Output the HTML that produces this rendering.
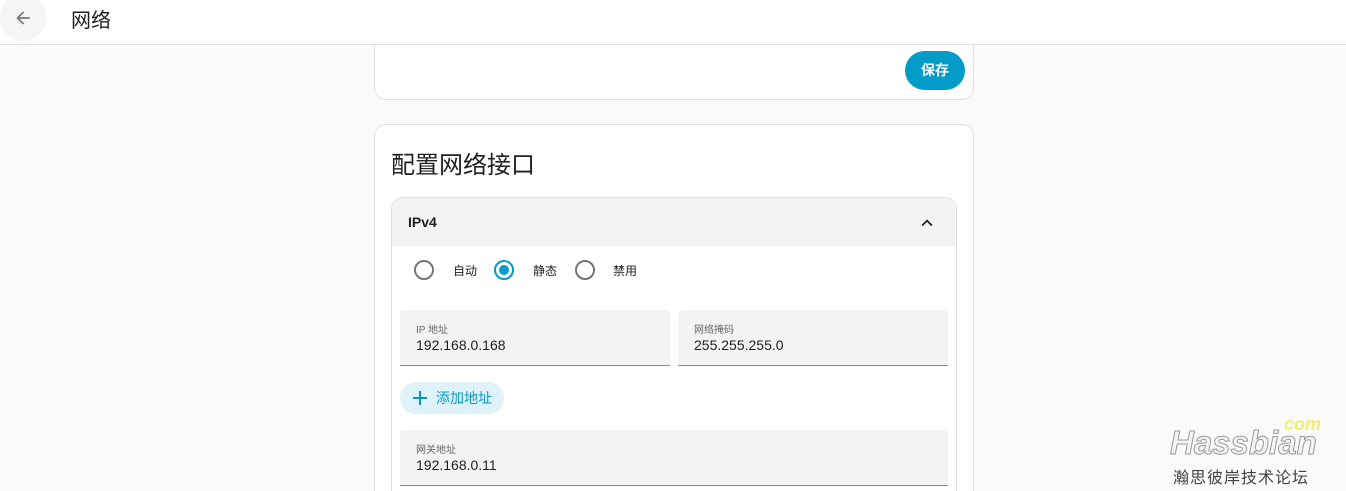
<!DOCTYPE html>
<html><head><meta charset="utf-8"><style>
*{box-sizing:border-box;margin:0;padding:0}
html{width:1346px;height:491px;overflow:hidden}
body{width:1346px;height:491px;overflow:hidden;background:#fafafa;font-family:"Liberation Sans","Noto Sans CJK SC",sans-serif;color:#212121;position:relative}
.hdr{position:absolute;left:0;top:0;width:1346px;height:45px;background:#fff;border-bottom:1px solid #e0e0e0;z-index:5}
.back{position:absolute;left:0;top:-6px;width:47px;height:47px;border-radius:50%;background:#f5f5f5}
.ttl{position:absolute;left:71px;top:4px;font-size:20px}
.card{position:absolute;left:374px;width:600px;background:#fff;border:1px solid #e0e0e0;border-radius:12px}
.save{position:absolute;left:905px;top:51px;width:60px;height:39px;border-radius:20px;background:#039bc8;color:#fff;font-size:14px;font-weight:bold;text-align:center;line-height:39px}
.panel{position:absolute;left:391px;top:197px;width:566px;height:294px;border:1px solid #e0e0e0;border-bottom:none;border-radius:12px 12px 0 0;background:#fff;overflow:hidden}
.ph{height:48px;background:#f3f3f3;font-size:14px;font-weight:bold;padding:16px 0 0 16px}
.radio{position:absolute;top:260px;width:20px;height:20px;border:2px solid #757575;border-radius:50%}
.radio.on{border-color:#039bc8}
.radio.on::after{content:"";position:absolute;left:3px;top:3px;width:10px;height:10px;border-radius:50%;background:#039bc8}
.rl{position:absolute;top:262px;font-size:12px}
.field{position:absolute;background:#f3f3f3;border-radius:4px 4px 0 0;border-bottom:1px solid #8a8a8a;height:56px}
.field .l{position:absolute;left:16px;top:11px;font-size:10px;color:#666}
.field .v{position:absolute;left:16px;top:27px;font-size:14px}
.add{position:absolute;left:400px;top:382px;width:104px;height:32px;border-radius:16px;background:#dff1f9;color:#039bc8;font-size:14px;line-height:32px;padding-left:36px}
</style></head><body>
<div class="hdr"><div class="back"></div>
<svg style="position:absolute;left:13px;top:8px" width="20" height="20" viewBox="0 0 24 24"><path d="M20 11H7.83l5.59-5.59L12 4l-8 8 8 8 1.41-1.41L7.83 13H20v-2z" fill="#757575"/></svg>
<div class="ttl">网络</div></div>
<div class="card" style="top:0;height:100px;border-top:none;border-radius:0 0 12px 12px"></div>
<div class="save">保存</div>
<div class="card" style="top:124px;height:367px;border-bottom:none;border-radius:12px 12px 0 0"></div>
<div style="position:absolute;left:391px;top:145px;font-size:24px">配置网络接口</div>
<div class="panel"><div class="ph">IPv4</div>
<svg style="position:absolute;left:524px;top:14px" width="22" height="22" viewBox="0 0 24 24"><path d="M7.41 15.41 12 10.83l4.59 4.58L18 14l-6-6-6 6z" fill="#212121"/></svg></div>
<div class="radio" style="left:414px"></div><div class="rl" style="left:453px">自动</div>
<div class="radio on" style="left:494px"></div><div class="rl" style="left:533px">静态</div>
<div class="radio" style="left:575px"></div><div class="rl" style="left:613px">禁用</div>
<div class="field" style="left:400px;top:310px;width:270px"><div class="l">IP 地址</div><div class="v">192.168.0.168</div></div>
<div class="field" style="left:678px;top:310px;width:270px"><div class="l">网络掩码</div><div class="v">255.255.255.0</div></div>
<div class="add">添加地址</div>
<svg style="position:absolute;left:411px;top:389px" width="18" height="18" viewBox="0 0 18 18"><path d="M9 2v14M2 9h14" stroke="#039bc8" stroke-width="2"/></svg>
<div class="field" style="left:400px;top:430px;width:548px"><div class="l">网关地址</div><div class="v">192.168.0.11</div></div>
<div style="position:absolute;left:1284px;top:414px;font-size:18px;font-style:italic;font-weight:bold;color:#f2ee70">com</div>
<div style="position:absolute;left:1170px;top:424px;font-size:33px;font-style:italic;font-weight:bold;color:#f4f4f4;-webkit-text-stroke:1px #999">Hassbian</div>
<div style="position:absolute;left:1173px;top:464px;font-size:16px;color:#444;letter-spacing:1px">瀚思彼岸技术论坛</div>
</body></html>
